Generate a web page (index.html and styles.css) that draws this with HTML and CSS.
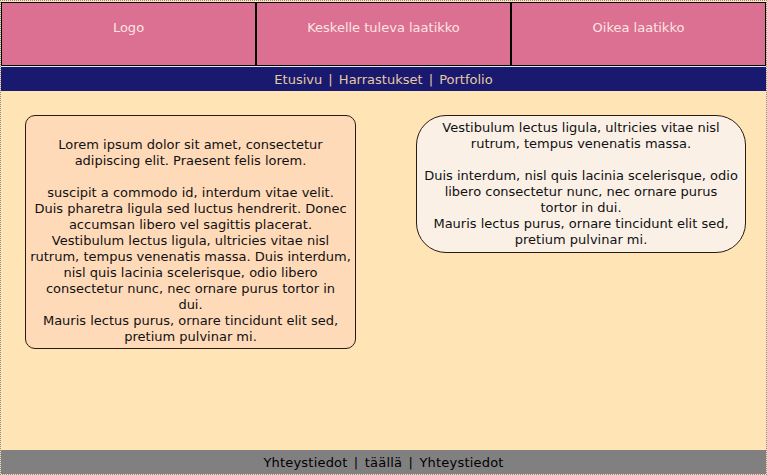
FILE: index.html
```html
<!DOCTYPE html>
<html lang="fi">
<head>
<meta charset="utf-8">
<title>Sivu</title>
<link rel="stylesheet" href="styles.css">
</head>
<body>
<div class="page">
  <header class="header">
    <div class="hbox">Logo</div>
    <div class="hbox">Keskelle tuleva laatikko</div>
    <div class="hbox">Oikea laatikko</div>
  </header>
  <nav class="nav">Etusivu | Harrastukset | Portfolio</nav>
  <main class="main">
    <div class="box box-left">Lorem ipsum dolor sit amet, consectetur<br>adipiscing elit. Praesent felis lorem.<br><br>suscipit a commodo id, interdum vitae velit.<br>Duis pharetra ligula sed luctus hendrerit. Donec<br>accumsan libero vel sagittis placerat.<br>Vestibulum lectus ligula, ultricies vitae nisl<br>rutrum, tempus venenatis massa. Duis interdum,<br>nisl quis lacinia scelerisque, odio libero<br>consectetur nunc, nec ornare purus tortor in<br>dui.<br>Mauris lectus purus, ornare tincidunt elit sed,<br>pretium pulvinar mi.</div>
    <div class="box box-right">Vestibulum lectus ligula, ultricies vitae nisl<br>rutrum, tempus venenatis massa.<br><br>Duis interdum, nisl quis lacinia scelerisque, odio<br>libero consectetur nunc, nec ornare purus<br>tortor in dui.<br>Mauris lectus purus, ornare tincidunt elit sed,<br>pretium pulvinar mi.</div>
  </main>
  <footer class="footer">Yhteystiedot | täällä | Yhteystiedot</footer>
</div>
</body>
</html>
```
FILE: styles.css
```css
* { box-sizing: border-box; }
html, body { margin: 0; padding: 0; }
body {
  background: #ffffff;
  font-family: "DejaVu Sans", Verdana, sans-serif;
  font-size: 13px;
  line-height: 16px;
}
.page {
  width: 767px;
  height: 475px;
  border: 1px dotted #8a8a8a;
  display: flex;
  flex-direction: column;
  background: #ffe4b5;
}
.header {
  display: flex;
  border-bottom: 1px solid #dfe8f0;
  margin-top: 1px;
}
.hbox {
  flex: 1;
  height: 64px;
  border: 1px solid #000;
  background: #db7093;
  color: #ffe4e1;
  text-align: center;
  padding-top: 17px;
}
.nav {
  height: 24px;
  background: #191970;
  color: #e6c9a0;
  text-align: center;
  padding-top: 5px;
  word-spacing: 2px;
}
.main {
  flex: 1;
  display: flex;
  justify-content: space-between;
  align-items: flex-start;
  padding: 24px 20px 0 24px;
}
.box {
  width: 331px;
  border: 1px solid #2a1a10;
  color: #111;
  text-align: center;
  white-space: nowrap;
}
.box-left {
  background: #ffdab9;
  border-radius: 10px;
  padding: 21px 2px 3px;
}
.box-right {
  width: 330px;
  background: #faf0e6;
  border-radius: 30px;
  padding: 4px 2px 4px;
}
.footer {
  height: 24px;
  background: #808080;
  color: #000;
  text-align: center;
  font-family: "DejaVu Sans", Tahoma, sans-serif;
  font-size: 13px;
  padding-top: 5px;
  letter-spacing: 0.2px;
  word-spacing: 2px;
}
```
